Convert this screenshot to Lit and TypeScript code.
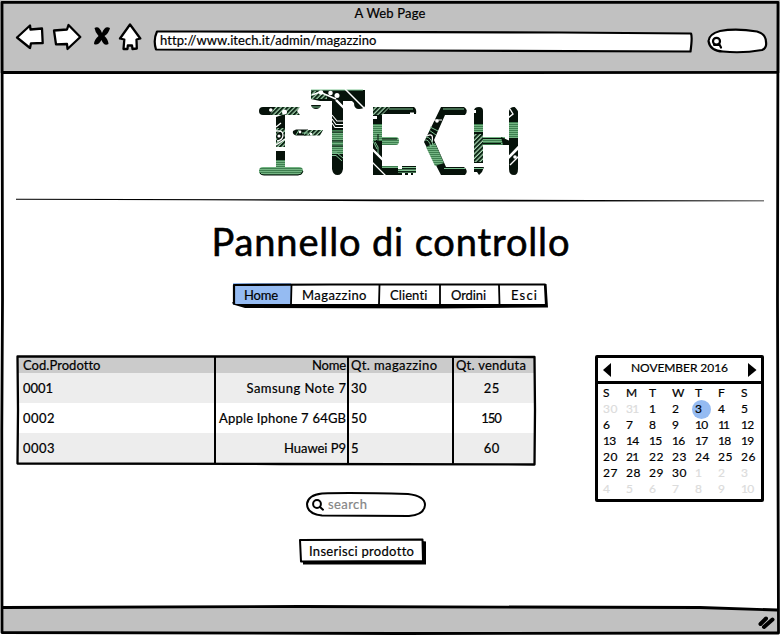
import { LitElement, html, svg, css } from "lit";
import { customElement, property } from "lit/decorators.js";
import { classMap } from "lit/directives/class-map.js";

/** A single line of text whose tracking is adjusted to fill a given width. */
@customElement("fit-text")
class FitText extends LitElement {
  @property() text = "";
  @property({ type: Number }) width = 0;
  static styles = css`
    :host { display: inline-block; white-space: pre; }
    .run { display: inline-block; }
  `;
  render() {
    return html`<span class="run">${this.text}</span>`;
  }
  updated() {
    const run = this.renderRoot.querySelector(".run") as HTMLElement;
    run.style.letterSpacing = "0px";
    const n = this.text.length - 1;
    if (!this.width || n < 1) return;
    const gap = (this.width - run.getBoundingClientRect().width) / n;
    run.style.letterSpacing = gap + "px";
    run.style.marginRight = -gap + "px";
  }
}

const fit = (text: string, width = 0) => html`<fit-text .text=${text} .width=${width}></fit-text>`;

@customElement("site-logo")
class SiteLogo extends LitElement {
  static styles = css`
    :host { display: block; width: 270px; height: 90px; }
    svg { display: block; }
    .k { fill: #06120a; }
    .g { fill: url(#fine); }
    .w { fill: #fff; }
    .wl { stroke: #fff; fill: none; }
    .gl { stroke: #7fc493; fill: none; stroke-width: 1; }
    .kl { stroke: #06120a; fill: none; stroke-width: 1; }
  `;
  render() {
    return html`<svg width="270" height="90" viewBox="255 88 270 90">
      <defs>
        <pattern id="fine" width="4" height="2" patternUnits="userSpaceOnUse">
          <rect width="4" height="2" fill="#74b583"></rect><rect width="4" height="1" fill="#3f7f50"></rect>
        </pattern>
        <pattern id="bars" width="4" height="3" patternUnits="userSpaceOnUse">
          <rect width="4" height="3" fill="#86c695"></rect><rect width="4" height="1.500" fill="#0b2414"></rect>
        </pattern>
        <pattern id="diag" width="3.2" height="4" patternUnits="userSpaceOnUse" patternTransform="rotate(45)">
          <rect width="3.2" height="4" fill="#a9d8b3"></rect><rect width="2" height="4" fill="#0b2414"></rect>
        </pattern>
      </defs>
      <!-- I -->
      <path class="k" d="M263 107H276L272 115H263Q259 115 259 111Q259 107 263 107Z"></path>
      <path fill="url(#diag)" d="M275 107H300L297 111L300 115H270Z"></path>
      <path class="w" d="M269 110a1.800 1.800 0 1 0 3.600 0a1.800 1.800 0 1 0 -3.600 0M282 112a2.500 2.500 0 1 0 5 0a2.500 2.500 0 1 0 -5 0"></path>
      <path class="k" d="M276 117L282 115H285V129H276Z"></path>
      <path fill="url(#diag)" d="M276 128H285V147H276Z"></path>
      <circle cx="280.500" cy="136" r="4" fill="#06120a"></circle>
      <path class="wl" stroke-width="1.300" d="M276 127L281 123M276 131Q283 130 283 135Q283 140 277 141M276 145L285 139"></path>
      <circle class="w" cx="279" cy="136" r="1.600"></circle>
      <rect class="k" x="276" y="151" width="9" height="9"></rect>
      <rect class="g" x="276" y="160" width="9" height="8"></rect>
      <rect class="g" x="259" y="167" width="44" height="8" rx="4"></rect>
      <path class="kl" d="M260 173Q261 175 264 175H298Q302 175 303 171" stroke-width=".8"></path>
      <!-- dash -->
      <path class="k" d="M296 129.500H308V135.500H296Q292 134 293 131Z"></path>
      <path fill="url(#diag)" d="M304 130H323L320 135.500H304Z"></path>
      <path class="gl" d="M299 130L296 135M302 133H308"></path>
      <circle class="w" cx="300" cy="132" r="1.400"></circle>
      <circle class="w" cx="311" cy="134" r="1.200"></circle>
      <!-- T -->
      <path class="k" d="M311 90H365V106Q364 109 359 109Q354 109 354 103L352 101H320L311 99Z"></path>
      <path fill="url(#diag)" d="M311 91H320L327 95V99H311Z"></path>
      <path class="gl" d="M311 90H363" stroke-width=".8"></path>
      <path class="wl" stroke-width="1.500" d="M345 89L364 108M322 93L336 99M312 95L320 92"></path>
      <circle class="w" cx="321" cy="92.500" r="2.300"></circle>
      <circle class="w" cx="330.500" cy="93" r="2.300"></circle>
      <circle class="w" cx="337" cy="95.500" r="2.500"></circle>
      <path class="k" d="M311 105H321Q320 109 316 109Q312 109 311 105Z"></path>
      <path class="gl" d="M312 107H320"></path>
      <path class="k" d="M332 100H343V169Q342 175 337.500 175Q333 175 332 169Z"></path>
      <path class="wl" stroke-width="2.400" d="M336 100L345 109"></path>
      <rect class="g" x="332" y="130" width="11" height="24"></rect>
      <path class="wl" stroke-width="1.100" d="M332 115L337 121H343M332 119L336 124.500H343M332 123L335 127.500H343"></path>
      <path class="kl" stroke-width="1.500" d="M332 132H343M332 141H343M332 146H343"></path>
      <path class="gl" d="M332 153H337L343 158M332 155.500H336L342 161"></path>
      <!-- E -->
      <path class="k" d="M373 107H414Q417 109 416 114H382V166H416V175H373Z"></path>
      <path fill="url(#diag)" d="M373 107H390L382 115H373Z"></path>
      <path class="gl" stroke-width="2" d="M389 109H413"></path>
      <path class="w" d="M410 112.500h4v3h-4z"></path>
      <path class="w" d="M373 116H377V119H373Z"></path>
      <rect class="g" x="373" y="124" width="9" height="17"></rect>
      <path class="g" d="M382 137H396Q399 137 399 141Q399 145 396 145H382Z"></path>
      <path class="kl" d="M378 134V153L382 158M376 140L380 144V150M382 139H397"></path>
      <path class="gl" d="M375 142L378 147V155M373 141L377 149"></path>
      <path class="wl" stroke-width="2.400" d="M372 149L383 160"></path>
      <path class="wl" stroke-width="1.300" d="M372 162L386 176"></path>
      <path class="g" d="M382 166H398V168H382Z"></path>
      <path fill="url(#bars)" d="M398 167H416V173H398Z"></path>
      <path class="w" d="M398 166h4v3h-4zM402 173h3v3h-3zM408 173h3v3h-3zM413 173h4v3h-4z"></path>
      <!-- C -->
      <path class="k" d="M441 107H464Q469 110 465 115H445L434 140L446 167H464Q469 171 465 175H441L424 142Z"></path>
      <path class="gl" stroke-width="2" d="M443 109H464M444 168.500H465"></path>
      <path class="g" d="M426 147L435 143L444 163L435 166Z"></path>
      <path class="wl" stroke-width="1.200" d="M434 120L442 120M427 136Q434 132 432 142"></path>
      <path class="gl" d="M430 127L438 131M429 130L436 135M425 140Q429 139 431 147M426 137Q431 137 433 145"></path>
      <circle class="w" cx="437" cy="121" r="1.800"></circle>
      <!-- H -->
      <path class="k" d="M474 111Q474 107 479 107Q483 107 483 111V163H474Z"></path>
      <rect class="g" x="474" y="124" width="9" height="8"></rect>
      <rect fill="url(#diag)" x="474" y="134" width="9" height="28"></rect>
      <path class="k" d="M474 167H484L482 172L479 175L477 172L474 172Z"></path>
      <path class="gl" d="M474 168.500H483"></path>
      <path class="w" d="M473 110h3v3h-3z"></path>
      <rect class="g" x="483" y="137" width="22" height="8"></rect>
      <path class="kl" d="M483 138.500H503M483 143.500H501"></path>
      <path class="k" d="M501 137L510 141V145H503Z"></path>
      <path class="k" d="M509 111Q510 107 514 107Q518 107 518 112V169Q518 175 514 175Q509 175 509 169Z"></path>
      <rect class="g" x="509" y="122" width="9" height="16"></rect>
      <path class="wl" stroke-width="1.400" d="M508 118L513 114L510 109M515 106L519 111M509 157L519 146M510 165L519 156"></path>
      <path class="wl" stroke-width="2.600" d="M508 158L519 147"></path>
      <circle class="w" cx="515" cy="157" r="1.800"></circle>
    </svg>`;
  }
}

const magnifier = (heavy: boolean) => html`<svg class="mag" width="14" height="14" viewBox="0 0 14 14">
  ${heavy
    ? svg`<circle cx="5.500" cy="5.300" r="3.500"></circle><path d="M3 8.800L8.500 8.600L10 11.500"></path>`
    : svg`<circle cx="6" cy="6" r="3.900"></circle><path d="M9 9L12 11.700"></path>`}
</svg>`;

const NAV = [
  { text: "Home", w: 34, cls: "n0" },
  { text: "Magazzino", w: 64.5, cls: "n1" },
  { text: "Clienti", w: 37.5, cls: "n2" },
  { text: "Ordini", w: 35, cls: "n3" },
  { text: "Esci", w: 26, cls: "n4" },
];

const ROWS: [string, number][][] = [
  [["Cod.Prodotto", 77], ["Nome", 34], ["Qt. magazzino", 86], ["Qt. venduta", 70]],
  [["0001", 30], ["Samsung Note 7", 99.5], ["30", 15.5], ["25", 15.5]],
  [["0002", 31.5], ["Apple Iphone 7 64GB", 127], ["50", 15.5], ["150", 20.5]],
  [["0003", 31.5], ["Huawei P9", 62], ["5", 0], ["60", 15.5]],
];

const DAYS = Array.from({ length: 42 }, (_, i) => {
  const d = i - 1;
  return d < 1 ? { n: 31 + d, off: true } : d > 30 ? { n: d - 30, off: true } : { n: d, off: false };
});

const dayWidth = (s: string) => [...s].reduce((a, c) => a + (c === "1" ? 6 : 7.2), 0);

@customElement("app-root")
class AppRoot extends LitElement {
  static styles = css`
    :host {
      display: block; position: relative; width: 780px; height: 635px; overflow: hidden;
      background: #fff; color: #000; font: 13px/18px Lato, "Open Sans", sans-serif;
      -webkit-text-stroke: 0.2px currentColor;
    }
    .page { display: flex; flex-direction: column; height: 635px; }
    svg { display: block; }
    .line { fill: none; stroke: #000; stroke-linecap: round; stroke-linejoin: round; }
    .sketch { position: absolute; left: 0; top: 0; overflow: visible; pointer-events: none; }
    .frame { position: absolute; left: 0; top: 0; pointer-events: none; }

    .chrome { height: 73px; background: #c1c1c1; box-sizing: border-box; padding-top: 4px; }
    .title { text-align: center; height: 19px; }
    .bar { display: flex; align-items: flex-start; }
    .tools { flex: none; width: 153px; height: 32px; }
    .url { position: relative; width: 539px; height: 22px; margin-top: 7px; }
    .url .txt { position: relative; padding-left: 7px; line-height: 21px; }
    .find { position: relative; width: 60px; height: 24px; margin: 6px 0 0 15px; }
    .find .mag { position: relative; margin: 7px 0 0 4px; }
    .mag { fill: none; stroke: #000; stroke-width: 2; stroke-linecap: round; }
    .find .mag { stroke-width: 2.2; }

    main { flex: 1; display: flex; flex-direction: column; align-items: center; }
    site-logo { margin-top: 15px; }
    .rule { margin-top: 20px; }
    h1 { margin: 15px 0 0 1px; font-size: 38px; line-height: 48px; height: 48px; font-weight: 400; -webkit-text-stroke: 0.6px #000; }
    nav { position: relative; align-self: flex-start; display: flex; width: 314px; height: 25px; margin: 18px 0 0 233px; }
    nav .item { position: relative; padding-left: 11px; box-sizing: border-box; line-height: 24px; }
    .n0 { width: 58px; background: #95bbf2; height: 22px; }
    .n1 { width: 88px; } .n2 { width: 61px; } .n3 { width: 60px; } .n4 { width: 47px; }

    .content { display: flex; align-self: stretch; justify-content: space-between; margin: 47px 16px 0 17px; height: 148px; }
    .table { position: relative; width: 518px; height: 110px; margin-top: 1px; }
    .row { display: grid; grid-template-columns: 198px 133px 106px 81px; height: 30px; line-height: 30px; }
    .row.head { height: 17px; line-height: 18px; background: #cbcbcb; }
    .row.odd { background: #ededed; }
    .c0 { padding-left: 6px; }
    .c1 { text-align: right; padding-right: 2px; }
    .c2 { padding-left: 3px; }
    .c3 { text-align: center; padding-right: 6px; }
    .row.head .c3 { padding-right: 7px; }

    .cal { width: 169px; height: 147px; border: 3px solid #000; border-radius: 2px; box-sizing: border-box; font-size: 12px; }
    .month { display: flex; justify-content: space-between; align-items: center; height: 23px; border-bottom: 3px solid #000; padding: 0 4px 0 5px; }
    .month .t { line-height: 19px; padding-bottom: 4px; }
    .days { display: grid; grid-template-columns: repeat(7, 23px); padding: 0 0 0 5px; }
    .day { position: relative; height: 16px; line-height: 16px; }
    .wd { height: 17px; line-height: 17px; }
    .off { color: #dcdcdc; }
    .sel::before { content: ""; position: absolute; left: -3px; top: -1px; width: 19px; height: 19px; border-radius: 50%; background: #95bbf2; }
    .sel fit-text { position: relative; }

    .search, .button { position: relative; align-self: flex-start; }
    .search { display: flex; width: 120px; height: 25px; margin: -11px 0 0 306px; color: #858585; }
    .search .mag { position: relative; margin: 6px 0 0 5px; }
    .search .txt { position: relative; padding-left: 3px; line-height: 24px; }
    .button { width: 127px; height: 26px; margin: 22px 0 0 299px; padding-left: 10px; box-sizing: border-box; line-height: 24px; }
    .button fit-text { position: relative; }
    footer { height: 27px; }
  `;

  render() {
    return html`
      <div class="page">
        <header class="chrome">
          <div class="title">${fit("A Web Page", 71)}</div>
          <div class="bar">
            <svg class="tools" viewBox="0 23 153 32">
              <g fill="#fff" stroke="#000" stroke-width="2.3" stroke-linejoin="round">
                <path d="M17 37.500L30 25.500L30.500 29.500L42 28.500L42.700 43L31 43.300L30 48Z"></path>
                <path d="M54 30.500L67 29.500L68.500 25L80.300 37L67.500 49L67 44L56 44.300Z"></path>
                <path d="M130 24.500L140.300 38.500L136.500 39.500L136.800 48.500L132.500 49L132 45.500H127.800L127.500 49L123.500 49L124.300 39.500L120 38.500Z"></path>
              </g>
              <path d="M94.500 28Q99 25 102 33Q105 25 110 28Q109 33 104.500 36Q108 39 108.500 44Q104 46.500 101.500 40Q98 46 94 44Q94 40 98.500 36Q95 32 94.500 28Z"></path>
            </svg>
            <div class="url">
              <svg class="sketch" width="539" height="22" viewBox="153 30 539 22">
                <path d="M157 31.500L200 31.500L560 32.500L691 33.500Q692.500 37 690.500 51.500L400 50.500L156 49.500Q153 40 157 31.500Z" fill="#fff" stroke="#000" stroke-width="2.2" stroke-linejoin="round"></path>
              </svg>
              <div class="txt">${fit("http://www.itech.it/admin/magazzino", 216)}</div>
            </div>
            <div class="find">
              <svg class="sketch" width="60" height="24" viewBox="707 29 60 24">
                <path d="M720 31Q736 28 757 31.500Q766 34 766 42Q767 48 762 50Q742 53.500 723 51.500Q710 51 708.500 41Q709 34 720 31Z" fill="#fff" stroke="#000" stroke-width="2.2"></path>
              </svg>
              ${magnifier(true)}
            </div>
          </div>
        </header>

        <main>
          <site-logo></site-logo>
          <svg class="rule" width="748" height="4" viewBox="16 198 748 4">
            <path d="M16 198.800L300 199.300L764 200.500V201.300L560 201.600L380 201.200L200 200.200L16 199.800Z"></path>
          </svg>
          <h1>${fit("Pannello di controllo", 358)}</h1>
          <nav>
            ${NAV.map((n) => html`<div class="item ${n.cls}">${fit(n.text, n.w)}</div>`)}
            <svg class="sketch" width="314" height="25" viewBox="233 283 314 25">
              <path class="line" stroke-width="2.200" d="M234 285L330 284.500L545 284.500L546 304M234 285L234 303"></path>
              <path class="line" stroke-width="1.800" d="M291.500 285L291 304M379.500 285L379 304M440 285V304M499 285L499.500 304"></path>
              <path d="M232 302L236 304L546 304L544.500 284L546.500 284L548 307.500L440 308.500L245 308L233 304.500Z"></path>
            </svg>
          </nav>

          <div class="content">
            <div class="table">
              ${ROWS.map((r, i) => html`<div class=${classMap({ row: true, head: i === 0, odd: i % 2 === 1 })}>
                ${r.map(([t, w], c) => html`<div class="c${c}">${fit(t, w)}</div>`)}
              </div>`)}
              <svg class="sketch" width="518" height="110" viewBox="17 356 518 110">
                <path class="line" stroke-width="2.300" d="M17.500 356.500L280 356.500L534.500 357L535 410L534.500 464.500L280 464L17.500 463.500L18 410Z"></path>
                <path class="line" stroke-width="2" d="M215 357V463M348 357V463M453 357V463"></path>
              </svg>
            </div>
            <div class="cal">
              <div class="month">
                <svg width="8" height="14" viewBox="0 0 8 14"><path d="M8 0V14L0 7Z"></path></svg>
                <div class="t">${fit("NOVEMBER 2016", 97)}</div>
                <svg width="9" height="14" viewBox="0 0 9 14"><path d="M0 0V14L8.500 7Z"></path></svg>
              </div>
              <div class="days">
                ${[..."SMTWTFS"].map((d) => html`<div class="day wd">${d}</div>`)}
                ${DAYS.map((d) => html`<div class=${classMap({ day: true, off: d.off, sel: !d.off && d.n === 3 })}>
                  ${fit(String(d.n), dayWidth(String(d.n)))}</div>`)}
              </div>
            </div>
          </div>

          <div class="search">
            <svg class="sketch" width="120" height="25" viewBox="306 493 120 25">
              <path d="M322 494.500Q350 493.500 408 495Q425 497 425 506Q424 516 409 517L322 516.500Q307 515 307 505Q308 496 322 494.500Z" fill="#fff" stroke="#000" stroke-width="2"></path>
            </svg>
            ${magnifier(false)}
            <div class="txt">${fit("search", 39)}</div>
          </div>
          <div class="button">
            <svg class="sketch" width="127" height="26" viewBox="299 540 127 26">
              <path d="M303 562H422V542L426 542.500V565.500H303Z"></path>
              <path d="M300 541L422.500 540.500L423 562L301 562.500Z" fill="#fff" stroke="#000" stroke-width="2" stroke-linejoin="round"></path>
            </svg>
            ${fit("Inserisci prodotto", 104.5)}
          </div>
        </main>
        <footer></footer>
      </div>
      <svg class="frame" width="780" height="635" viewBox="0 0 780 635">
        <path d="M3 607L400 606.500L560 606.500L700 608.500L777 610V632H3Z" fill="#c1c1c1"></path>
        <g class="line" stroke-width="2.800">
          <path d="M2 2.300H778L777.500 300L778.500 633L400 633.500L2 632.500L1.800 430L2.500 300Z"></path>
          <path d="M3 72.500L400 72.800L777 72.300"></path>
          <path d="M3 607.500L300 606.500L700 607.500L777 610"></path>
        </g>
        <path class="line" stroke-width="4" d="M760.500 624L766 618.500M764 627L772.500 619.500"></path>
      </svg>
    `;
  }
}
